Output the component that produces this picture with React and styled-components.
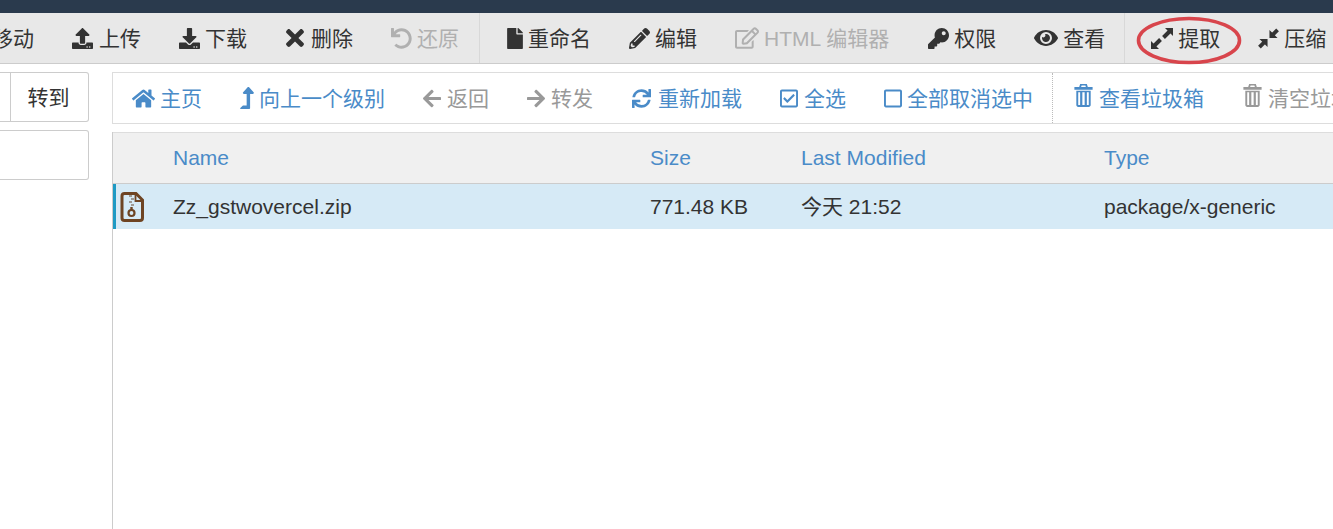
import React from "react"
import styled, { createGlobalStyle } from "styled-components"
import {
  FaUpload, FaDownload, FaTimes, FaUndo, FaFile, FaPencilAlt, FaRegEdit, FaKey, FaEye,
  FaHome, FaLevelUpAlt, FaArrowLeft, FaArrowRight, FaSync, FaRegCheckSquare, FaRegSquare,
} from "react-icons/fa"

const GlobalStyle = createGlobalStyle`
  html, body { margin: 0; padding: 0; background: #fff; overflow: hidden; }
  body {
    font-family: "Liberation Sans", "Noto Sans CJK SC", sans-serif;
    font-size: 21px;
    line-height: 30px;
    color: #333;
  }
`

const Page = styled.div`
  position: relative;
  width: 1333px;
  height: 529px;
  overflow: hidden;
`

const TopBar = styled.div`
  height: 13px;
  background: #2a3a4d;
`

const Toolbar = styled.div`
  display: flex;
  height: 50px;
  margin-left: -27px;
  width: 1500px;
  background: #e8e8e8;
  border-bottom: 1px solid #ccc;
`

const Group = styled.div`
  display: flex;
  align-items: center;
  padding: 0 ${(p) => p.$right}px 0 ${(p) => p.$left}px;
  border-right: 1px solid #d8d8d8;
`

const ToolItem = styled.div`
  display: flex;
  align-items: center;
  gap: ${(p) => p.$gap}px;
  padding: 0 19px;
  white-space: nowrap;
  color: ${(p) => (p.$off ? "#b0b0b0" : "#333")};
`

const Label = styled.span`
  padding-top: 2px;
`

const IconSlot = styled.span`
  display: flex;
  align-items: center;
  justify-content: center;
  width: ${(p) => p.$w}px;
  padding-bottom: ${(p) => p.$lift || 0}px;
  flex: none;
`

const Main = styled.div`
  display: flex;
  gap: 23px;
  padding-top: 8px;
`

const LeftCol = styled.div`
  flex: none;
  width: 89px;
  display: flex;
  flex-direction: column;
  gap: 8px;
`

const GoRow = styled.div`
  display: flex;
  height: 50px;
  box-sizing: border-box;
  border: 1px solid #ccc;
  border-left: none;
  border-radius: 0 3px 3px 0;
  padding-left: 10px;
`

const GoButton = styled.div`
  flex: 1;
  display: flex;
  align-items: center;
  justify-content: center;
  padding: 2px 2px 0 0;
  border-left: 1px solid #ccc;
`

const PathInput = styled.div`
  height: 50px;
  box-sizing: border-box;
  border: 1px solid #ccc;
  border-left: none;
  border-radius: 0 3px 3px 0;
`

const RightCol = styled.div`
  flex: 1;
  min-width: 0;
  height: 457px;
  display: flex;
  flex-direction: column;
`

const NavBar = styled.div`
  display: flex;
  align-items: center;
  height: 52px;
  box-sizing: border-box;
  width: 1400px;
  border: 1px solid #ddd;
`

const NavGroup = styled.div`
  display: flex;
  align-items: center;
  align-self: stretch;
  padding-left: ${(p) => p.$pad}px;
  border-right: ${(p) => (p.$sep ? "1px dotted #bbb" : "none")};
`

const NavItem = styled.div`
  display: flex;
  align-items: center;
  gap: ${(p) => p.$gap}px;
  margin-right: ${(p) => p.$end}px;
  white-space: nowrap;
  color: ${(p) => (p.$off ? "#999" : "#4a8bc8")};
`

const Table = styled.div`
  flex: 1;
  margin-top: 8px;
  border-left: 1px solid #ccc;
`

const HeadRow = styled.div`
  display: grid;
  grid-template-columns: 60px 477px 151px 303px 1fr;
  align-items: center;
  height: 52px;
  box-sizing: border-box;
  background: #f0f0f0;
  border-bottom: 1px solid #ccc;
  border-top: 1px solid #ddd;
  color: #4a8bc8;
`

const FileRow = styled.div`
  display: grid;
  grid-template-columns: 57px 477px 151px 303px 1fr;
  align-items: center;
  height: 45px;
  background: #d6eaf6;
  border-left: 3px solid #1d9ac4;
  color: #333;
`

const FileIcon = styled.span`
  display: flex;
  padding-left: 4px;
`

const Highlight = styled.svg`
  position: absolute;
  left: 1134px;
  top: 14px;
`

const ArrowIcon = ({ lines, heads }) => (
  <svg width="22" height="21" viewBox="0 0 22 21" fill="currentColor">
    <path d={lines} stroke="currentColor" strokeWidth="4" fill="none" />
    <path d={heads} />
  </svg>
)

const ExpandIcon = () => <ArrowIcon lines="M3.500 17.500L9.500 11.500M12.500 9.500l6-6" heads="M0 21v-8l8 8zM22 0v8l-8-8z" />

const CompressIcon = () => <ArrowIcon lines="M1.500 19.500L7 14M15 7l5.500-5.500" heads="M10 11v8.500L1.500 11zM12 10V1.500l8.500 8.500z" />

const TrashIcon = ({ color }) => (
  <svg width="19" height="23" viewBox="0 0 19 24" fill={color}>
    <path d="M6 0h7l1 3h5v3H0V3h5zM7.500 1.500L7 3h5l-.5-1.500z" fillRule="evenodd" />
    <path d="M2 7h15v15c0 1.100-.9 2-2 2H4c-1.100 0-2-.9-2-2zm2 1.500V22h2V8.500zm4.300 0V22h2.400V8.500zm4.700 0V22h2V8.500z" fillRule="evenodd" />
  </svg>
)

const ZipIcon = () => (
  <svg width="24" height="30" viewBox="0 0 24 30" fill="none">
    <path d="M4.500 1.500H16L22.500 8v18c0 1.500-1 2.500-2.500 2.500H4.500C3 28.500 2 27.500 2 26V4c0-1.500 1-2.500 2.500-2.500z" stroke="#6e4423" strokeWidth="3" />
    <path d="M15.500 2v7h6.500" stroke="#6e4423" strokeWidth="1.800" />
    <path d="M9 4h3M11 7h3M9 10h3M11 13h3" stroke="#8a7f74" strokeWidth="1.700" />
    <circle cx="11.500" cy="21" r="3" stroke="#6e4423" strokeWidth="2.200" />
    <path d="M11.500 15v3" stroke="#6e4423" strokeWidth="2.400" />
  </svg>
)

const toolGroups = [
  {
    left: 0,
    right: 1,
    items: [
      { text: "移动" },
      { Icon: FaUpload, w: 21, gap: 6, text: "上传" },
      { Icon: FaDownload, w: 21, text: "下载" },
      { Icon: FaTimes, w: 20, size: 26, gap: 6, text: "删除" },
      { Icon: FaUndo, w: 21, text: "还原", off: true },
    ],
  },
  {
    left: 8,
    right: 0,
    items: [
      { Icon: FaFile, w: 16, text: "重命名" },
      { Icon: FaPencilAlt, w: 21, text: "编辑" },
      { Icon: FaRegEdit, w: 24, size: 24, text: "HTML 编辑器", off: true },
      { Icon: FaKey, w: 22, text: "权限" },
      { Icon: FaEye, w: 24, size: 24, text: "查看" },
    ],
  },
  {
    left: 7,
    right: 0,
    items: [
      { draw: <ExpandIcon />, w: 22, text: "提取" },
      { draw: <CompressIcon />, w: 21, text: "压缩" },
    ],
  },
]

const navMain = [
  { Icon: FaHome, w: 23, size: 23, text: "主页" },
  { Icon: FaLevelUpAlt, w: 14, size: 22, text: "向上一个级别" },
  { Icon: FaArrowLeft, w: 18, size: 21, gap: 6, text: "返回", off: true },
  { Icon: FaArrowRight, w: 18, size: 21, gap: 6, text: "转发", off: true },
  { Icon: FaSync, w: 21, gap: 6, text: "重新加载" },
  { Icon: FaRegCheckSquare, w: 18, size: 21, gap: 6, text: "全选" },
  { Icon: FaRegSquare, w: 18, size: 21, end: 19, text: "全部取消选中" },
]

export default function App() {
  return (
    <Page>
      <GlobalStyle />
      <TopBar />
      <Toolbar>
        {toolGroups.map((g, i) => (
          <Group key={i} $left={g.left} $right={g.right}>
            {g.items.map((it) => (
              <ToolItem key={it.text} $off={it.off} $gap={it.gap || 5}>
                {(it.Icon || it.draw) && (
                  <IconSlot $w={it.w}>
                    {it.draw || <it.Icon size={it.size || 21} />}
                  </IconSlot>
                )}
                <Label>{it.text}</Label>
              </ToolItem>
            ))}
          </Group>
        ))}
      </Toolbar>
      <Main>
        <LeftCol>
          <GoRow>
            <GoButton>转到</GoButton>
          </GoRow>
          <PathInput />
        </LeftCol>
        <RightCol>
          <NavBar>
            <NavGroup $pad={19} $sep>
              {navMain.map((it) => (
                <NavItem key={it.text} $off={it.off} $gap={it.gap || 5} $end={it.end || 38}>
                  <IconSlot $w={it.w}>
                    <it.Icon size={it.size || 19} />
                  </IconSlot>
                  <Label>{it.text}</Label>
                </NavItem>
              ))}
            </NavGroup>
            <NavGroup $pad={21}>
              <NavItem $gap={6} $end={38}>
                <IconSlot $w={19} $lift={6}><TrashIcon color="#4a8bc8" /></IconSlot>
                <Label>查看垃圾箱</Label>
              </NavItem>
              <NavItem $off $gap={6} $end={38}>
                <IconSlot $w={20} $lift={6}><TrashIcon color="#999" /></IconSlot>
                <Label>清空垃圾箱</Label>
              </NavItem>
            </NavGroup>
          </NavBar>
          <Table>
            <HeadRow>
              <span />
              <span>Name</span>
              <span>Size</span>
              <span>Last Modified</span>
              <span>Type</span>
            </HeadRow>
            <FileRow>
              <FileIcon><ZipIcon /></FileIcon>
              <span>Zz_gstwovercel.zip</span>
              <span>771.48 KB</span>
              <span>今天 21:52</span>
              <span>package/x-generic</span>
            </FileRow>
          </Table>
        </RightCol>
      </Main>
      <Highlight width="110" height="54" viewBox="0 0 110 54" fill="none">
        <ellipse cx="55" cy="26.500" rx="50.500" ry="22" stroke="#d8454c" strokeWidth="3.600" />
      </Highlight>
    </Page>
  )
}
